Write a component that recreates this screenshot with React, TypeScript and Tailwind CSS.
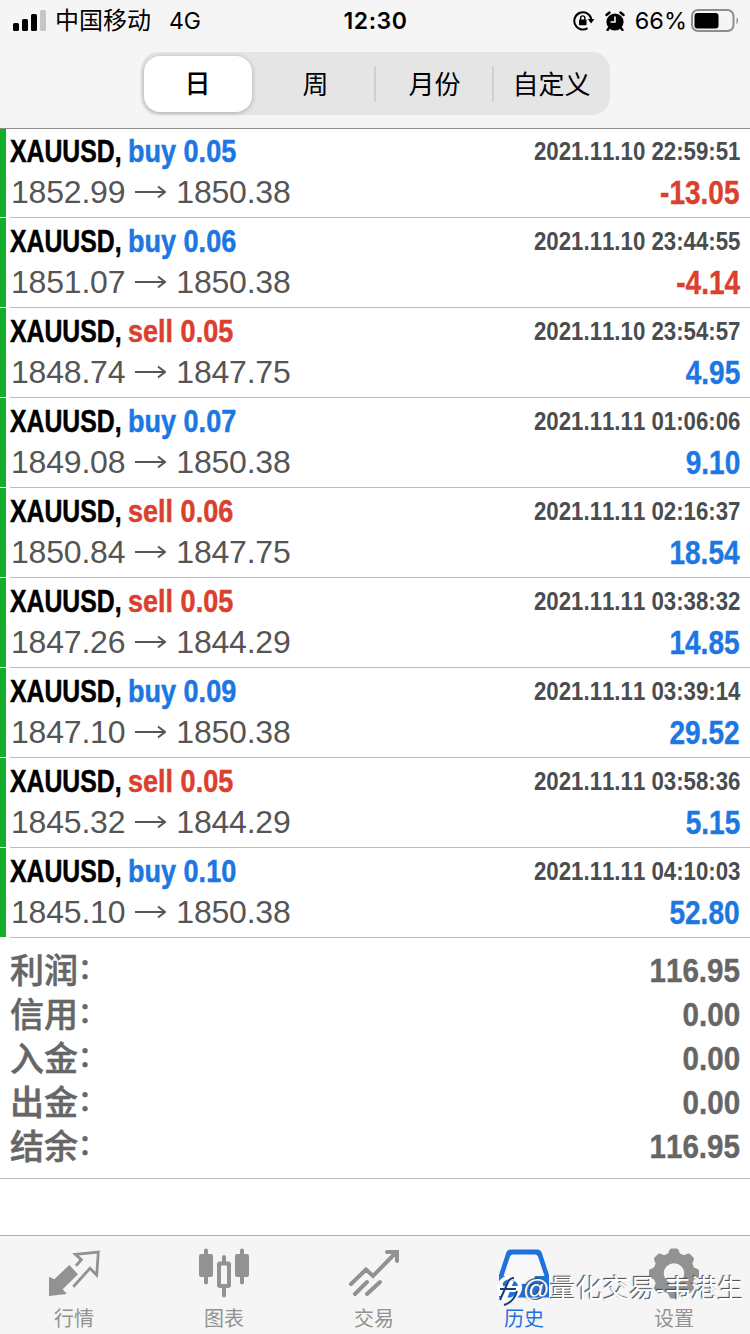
import type { ReactNode } from 'react';

type Deal = {
  side: 'buy' | 'sell';
  volume: string;
  open: string;
  close: string;
  time: string;
  profit: string;
};

const deals: Deal[] = [
  { side: 'buy', volume: '0.05', open: '1852.99', close: '1850.38', time: '2021.11.10 22:59:51', profit: '-13.05' },
  { side: 'buy', volume: '0.06', open: '1851.07', close: '1850.38', time: '2021.11.10 23:44:55', profit: '-4.14' },
  { side: 'sell', volume: '0.05', open: '1848.74', close: '1847.75', time: '2021.11.10 23:54:57', profit: '4.95' },
  { side: 'buy', volume: '0.07', open: '1849.08', close: '1850.38', time: '2021.11.11 01:06:06', profit: '9.10' },
  { side: 'sell', volume: '0.06', open: '1850.84', close: '1847.75', time: '2021.11.11 02:16:37', profit: '18.54' },
  { side: 'sell', volume: '0.05', open: '1847.26', close: '1844.29', time: '2021.11.11 03:38:32', profit: '14.85' },
  { side: 'buy', volume: '0.09', open: '1847.10', close: '1850.38', time: '2021.11.11 03:39:14', profit: '29.52' },
  { side: 'sell', volume: '0.05', open: '1845.32', close: '1844.29', time: '2021.11.11 03:58:36', profit: '5.15' },
  { side: 'buy', volume: '0.10', open: '1845.10', close: '1850.38', time: '2021.11.11 04:10:03', profit: '52.80' },
];

const summary = [
  { label: '利润', value: '116.95' },
  { label: '信用', value: '0.00' },
  { label: '入金', value: '0.00' },
  { label: '出金', value: '0.00' },
  { label: '结余', value: '116.95' },
];

const teeth = [0, 45, 90, 135, 180, 225, 270, 315];

const StatusBar = () => (
  <div className="grid h-[41px] grid-cols-3 items-center pl-[13px] pr-[11px] text-black">
    <div className="flex items-center">
      <svg className="h-[22px] w-[34px]" viewBox="0 0 34 22">
        <rect x="0" y="13" width="6" height="8" rx="1.5" />
        <rect x="9" y="9" width="6" height="12" rx="1.5" />
        <rect x="18" y="4" width="6" height="17" rx="1.5" />
        <rect x="27" y="0" width="6" height="21" rx="1.5" fill="#c6c6c6" />
      </svg>
      <span className="ml-2 text-2xl">中国移动</span>
      <span className="ml-[18px] pt-px font-[Inter] text-[23px]">4G</span>
    </div>
    <div className="pr-px pt-px text-center font-[Inter] text-[23px] font-semibold tracking-[0.6px]">12:30</div>
    <div className="flex items-center justify-end">
      <svg className="h-[22px] w-[22px]" viewBox="0 0 22 22">
        <path d="M14.5 18.2A8.6 8.6 0 1 1 18.3 9" fill="none" stroke="#000" strokeWidth="2" />
        <path d="M14.8 9h6.6l-3.3 4.6z" />
        <rect x="6" y="9.5" width="7.5" height="5.8" rx="0.8" />
        <path d="M7.6 10V8a2.1 2.1 0 0 1 4.2 0v2" fill="none" stroke="#000" strokeWidth="1.4" />
      </svg>
      <svg className="ml-2.5 h-[20px] w-[20px]" viewBox="0 0 20 20">
        <circle cx="10" cy="11" r="8.6" />
        <path d="M1.5 4 4.5 1.5M18.5 4 15.5 1.5M4 17l-1.5 2M16 17l1.5 2" stroke="#000" strokeWidth="2.4" strokeLinecap="round" />
        <path d="M10 5.5V11H5.5" fill="none" stroke="#f6f6f6" strokeWidth="1.6" />
      </svg>
      <span className="ml-2.5 pt-px font-[Inter] text-[23.5px]">66%</span>
      <svg className="ml-1 h-[24px] w-[48px]" viewBox="0 0 48 24">
        <rect x="1" y="1" width="41.5" height="21" rx="6" fill="none" stroke="#8d8d8d" strokeWidth="2" />
        <rect x="3.5" y="4" width="24" height="15.5" rx="3" />
        <path d="M45.5 8.5c2 1 2 5.5 0 6.5z" fill="#8d8d8d" />
      </svg>
    </div>
  </div>
);

const PeriodTabs = () => (
  <div className="mx-auto mt-[11px] flex h-[63px] w-[469px] items-center rounded-[18px] bg-[#e5e5e5] text-[26px] text-black">
    <div className="ml-[3px] flex h-14 w-[108px] items-center justify-center rounded-2xl bg-white pt-0.5 font-medium shadow-[0_1px_5px_rgba(0,0,0,0.25)]">日</div>
    <div className="flex h-9 w-[124px] items-center justify-center border-r-2 border-[#cfcfcf] pl-1.5 pt-1">周</div>
    <div className="flex h-9 w-[118px] items-center justify-center border-r-2 border-[#cfcfcf] pl-0.5 pt-1">月份</div>
    <div className="flex flex-1 items-center justify-center pt-1">自定义</div>
  </div>
);

const DealRow = ({ deal }: { deal: Deal }) => (
  <div className="flex h-[90px]">
    <div className="h-[89px] w-1.5 bg-[#14ad2b]" />
    <div className="ml-1 flex flex-1 flex-col border-b border-[#bdbdbd] pr-2.5">
      <div className="flex h-[46px] items-center justify-between font-bold">
        <div className="flex whitespace-pre text-[32px] [-webkit-text-stroke:0.5px]">
          <span className="w-[118px] origin-left scale-x-[0.775] text-black">XAUUSD,</span>
          <span
            className={`origin-left scale-x-[0.845] ${deal.side === 'buy' ? 'text-[#1d77e2]' : 'text-[#db402e]'}`}
          >
            {deal.side} {deal.volume}
          </span>
        </div>
        <div className="origin-right scale-x-[0.855] text-[26px] text-[#4b4c4e] [font-kerning:none]">{deal.time}</div>
      </div>
      <div className="flex h-9 items-center justify-between">
        <div className="flex items-center pl-px text-[32px] tracking-[-0.2px] text-[#555]">
          <span>{deal.open}</span>
          <svg className="mx-2.5 h-4 w-[31px]" viewBox="0 0 31 16" fill="none" stroke="currentColor" strokeWidth="2">
            <path d="M0 8h30M23 2.5 30 8l-7 5.5" />
          </svg>
          <span>{deal.close}</span>
        </div>
        <div
          className={`origin-right scale-x-[0.85] pt-0.5 text-[33px] font-bold [-webkit-text-stroke:0.4px] [font-kerning:none] ${deal.profit.startsWith('-') ? 'text-[#db402e]' : 'text-[#1d77e2]'}`}
        >
          {deal.profit}
        </div>
      </div>
    </div>
  </div>
);

const TabItem = ({ label, active, children }: { label: string; active?: boolean; children: ReactNode }) => (
  <div className={`flex flex-1 flex-col items-center pr-0.5 pt-3 ${active ? 'text-[#1d72dc]' : 'text-[#929292]'}`}>
    <svg className="h-[52px] w-[52px]" viewBox="0 0 52 52">{children}</svg>
    <span className="mt-1 text-[20px] leading-[30px]">{label}</span>
  </div>
);

const TabBar = () => (
  <div className="flex h-[99px] border-t border-[#b2b2b2] bg-[#f5f5f5]">
    <TabItem label="行情">
      <path d="M1 28.7V48L18.7 46 14.7 41.3 30 26.3 21.3 17 6.3 31.3z" fill="currentColor" />
      <path d="M28 17.7 33.3 11.7 27.3 6.3 50.3 4 48.7 27 42 20.3 25.3 38.7" fill="none" stroke="currentColor" strokeWidth="2.8" />
    </TabItem>
    <TabItem label="图表">
      <g fill="currentColor">
        <rect x="1" y="6" width="14" height="23" rx="2" />
        <rect x="6" y="0.5" width="4" height="36" rx="2" />
        <rect x="37" y="6" width="14" height="23" rx="2" />
        <rect x="42" y="0.5" width="4" height="36" rx="2" />
        <rect x="24" y="7" width="4" height="8" rx="2" />
        <rect x="24" y="38" width="4" height="11.5" rx="2" />
      </g>
      <rect x="21" y="15.5" width="10" height="22.5" rx="1" fill="none" stroke="currentColor" strokeWidth="4" />
    </TabItem>
    <TabItem label="交易">
      <g fill="none" stroke="currentColor" strokeWidth="4" strokeLinecap="round">
        <path d="M3 36 18 21.5 25 28 48 4.5M39 4h10v9M7 46 19 34M19 46 32 34" />
      </g>
    </TabItem>
    <TabItem label="历史" active>
      <path d="M1 49.5V27L8 5.5Q9 1.5 13 1.5h26q4 0 5 4l7 21.5v22.5z" fill="currentColor" />
      <path d="M5.5 28 12 8.5q1-2 3-2h22q2 0 3 2L46.5 28H37q-1 8-11 8t-11-8z" fill="#f8f8f8" />
    </TabItem>
    <TabItem label="设置">
      <circle cx="26" cy="25.5" r="15.5" fill="none" stroke="currentColor" strokeWidth="10.5" />
      {teeth.map((angle) => (
        <path
          key={angle}
          d="M19 8 21.5 2q.5-1.5 2-1.5h5q1.5 0 2 1.5L33 8z"
          fill="currentColor"
          transform={`rotate(${angle} 26 25.5)`}
        />
      ))}
    </TabItem>
  </div>
);

const Watermark = () => (
  <div className="absolute bottom-[27px] right-[6px] flex items-center text-[26.5px] leading-9 text-white [text-shadow:-1px_-1px_1px_#444]">
    <svg className="h-9 w-7" viewBox="0 0 28 36" fill="none">
      <path d="M5 13q4-8 12-6 9 2 8 11-2 8-11 12l-5 1" stroke="#fff" strokeWidth="4" />
      <path d="M5 13v12M4 18h20M8 30 16 9" stroke="#fff" strokeWidth="6" />
      <path d="M5 29 13 11q2-4 6-4M5 18h16M9 34q10-3 13-14" stroke="#183f78" strokeWidth="2" />
    </svg>
    @量化交易-韦港生
  </div>
);

export default function App() {
  return (
    <div className="relative flex h-[1334px] w-[750px] flex-col overflow-hidden bg-white font-['Liberation_Sans','Noto_Sans_CJK_SC',sans-serif]">
      <header className="relative h-32 bg-[#f5f5f5] shadow-[0_1px_0_#8e8e8e]">
        <StatusBar />
        <PeriodTabs />
      </header>
      <main className="flex-1">
        {deals.map((deal) => (
          <DealRow key={deal.time} deal={deal} />
        ))}
        <div className="flex h-[241px] flex-col border-b border-[#bdbdbd] px-2.5 pt-[11px] text-[#666]">
          {summary.map((item) => (
            <div key={item.label} className="flex h-11 items-center justify-between">
              <div className="flex items-center font-medium [-webkit-text-stroke:0.5px]">
                <span className="text-[34px] leading-[44px]">{item.label}</span>
                <span className="pb-0.5 text-[28px] leading-8">：</span>
              </div>
              <span className="origin-right scale-x-[0.87] pb-0.5 text-[34px] font-bold leading-[42px] [-webkit-text-stroke:0.4px] [font-kerning:none]">
                {item.value}
              </span>
            </div>
          ))}
        </div>
      </main>
      <TabBar />
      <Watermark />
    </div>
  );
}
